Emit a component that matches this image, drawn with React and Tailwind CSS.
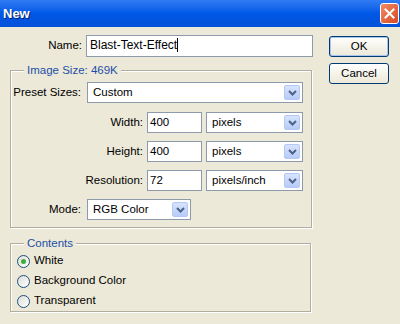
import React from 'react';

const Arrow = () => (
  <div className="absolute right-[2px] top-[2px] bottom-[2px] w-[16px] rounded-[2px] border border-[#b4c8f6] bg-gradient-to-b from-[#d8e4fd] to-[#b6cbf8] flex items-center justify-center">
    <svg width="9" height="6" viewBox="0 0 9 6">
      <path d="M1 1 L4.5 4.5 L8 1" fill="none" stroke="#4d6185" strokeWidth="2" />
    </svg>
  </div>
);

const Select = ({ value, className }) => (
  <div className={`relative h-[21px] bg-white border border-[#8c9aab] pl-[5px] leading-[19px] ${className}`}>
    {value}
    <Arrow />
  </div>
);

const Input = ({ value, className, caret }) => (
  <div className={`h-[21px] bg-white border border-[#8c9aab] pl-[2px] leading-[19px] ${className}`}>
    {value}
    {caret && <span className="inline-block w-[1px] h-[14px] bg-black align-middle -mt-[2px]" />}
  </div>
);

const Radio = ({ label, checked }) => (
  <div className="h-[20px] flex items-center pl-[6px] gap-[4px]">
    <div className="w-[13px] h-[13px] rounded-full border border-[#1c5180] bg-gradient-to-br from-[#dcdcd7] to-white flex items-center justify-center">
      {checked && <div className="w-[5px] h-[5px] rounded-full bg-[#3dae38]" />}
    </div>
    <span>{label}</span>
  </div>
);

const Group = ({ title, className, children }) => (
  <div className={`relative border border-[#b2ae9f] shadow-[inset_1px_1px_0_#fff,1px_1px_0_#fff] ${className}`}>
    <span className="absolute -top-[8px] left-[13px] px-[3px] bg-[#ece9d8] text-[#1d4fa8] leading-[14px] whitespace-nowrap">{title}</span>
    {children}
  </div>
);

const Row = ({ label, labelW, children, className }) => (
  <div className={`flex items-center ${className}`}>
    <div className="text-right whitespace-nowrap shrink-0" style={{ width: labelW }}>{label}</div>
    {children}
  </div>
);

export default function App() {
  return (
    <div className="w-[400px] h-[324px] bg-[#ece9d8] text-[11.5px] text-black overflow-hidden" style={{ fontFamily: '"Liberation Sans", Arial, sans-serif' }}>
      <div className="h-[27px] flex items-center justify-between bg-gradient-to-b from-[#2f7cf3] via-[#0058e6] to-[#0250d8] pl-[3px] pr-[1px]">
        <span className="text-white font-bold text-[13px] [text-shadow:1px_1px_0_#0a1e6a]">New</span>
        <div className="w-[19px] h-[21px] rounded-[3px] border border-white bg-gradient-to-br from-[#f08a64] to-[#d8461e] flex items-center justify-center">
          <svg width="11" height="11" viewBox="0 0 11 11">
            <path d="M1.5 1.5 L9.5 9.5 M9.5 1.5 L1.5 9.5" stroke="white" strokeWidth="2" strokeLinecap="square" />
          </svg>
        </div>
      </div>

      <div className="flex">
        <div className="w-[313px] shrink-0">
          <Row label="Name:" labelW="82px" className="mt-[8px]">
            <Input value="Blast-Text-Effect" caret className="ml-[4px] w-[227px] h-[22px] pl-[3px] text-[12px]" />
          </Row>

          <Group title="Image Size: 469K" className="ml-[10px] mt-[13px] w-[302px] h-[158px]">
            <Row label="Preset Sizes:" labelW="70px" className="mt-[11px]">
              <Select value="Custom" className="ml-[6px] w-[216px]" />
            </Row>
            <Row label="Width:" labelW="132px" className="mt-[9px]">
              <Input value="400" className="ml-[4px] w-[55px]" />
              <Select value="pixels" className="ml-[4px] w-[97px]" />
            </Row>
            <Row label="Height:" labelW="132px" className="mt-[8px]">
              <Input value="400" className="ml-[4px] w-[55px]" />
              <Select value="pixels" className="ml-[4px] w-[97px]" />
            </Row>
            <Row label="Resolution:" labelW="132px" className="mt-[8px]">
              <Input value="72" className="ml-[4px] w-[55px]" />
              <Select value="pixels/inch" className="ml-[4px] w-[97px]" />
            </Row>
            <Row label="Mode:" labelW="70px" className="mt-[8px]">
              <Select value="RGB Color" className="ml-[6px] w-[104px]" />
            </Row>
          </Group>

          <Group title="Contents" className="ml-[10px] mt-[15px] w-[301px] h-[69px] pt-[7px]">
            <Radio label="White" checked />
            <Radio label="Background Color" />
            <Radio label="Transparent" />
          </Group>
        </div>

        <div className="ml-[16px] mt-[9px] flex flex-col gap-[6px]">
          <button className="w-[60px] h-[21px] rounded-[3px] border border-[#003c74] bg-gradient-to-b from-white to-[#ece9d8] shadow-[inset_0_0_0_1px_#a8c4f0]">OK</button>
          <button className="w-[60px] h-[21px] rounded-[3px] border border-[#003c74] bg-gradient-to-b from-white to-[#ece9d8]">Cancel</button>
        </div>
      </div>
    </div>
  );
}
